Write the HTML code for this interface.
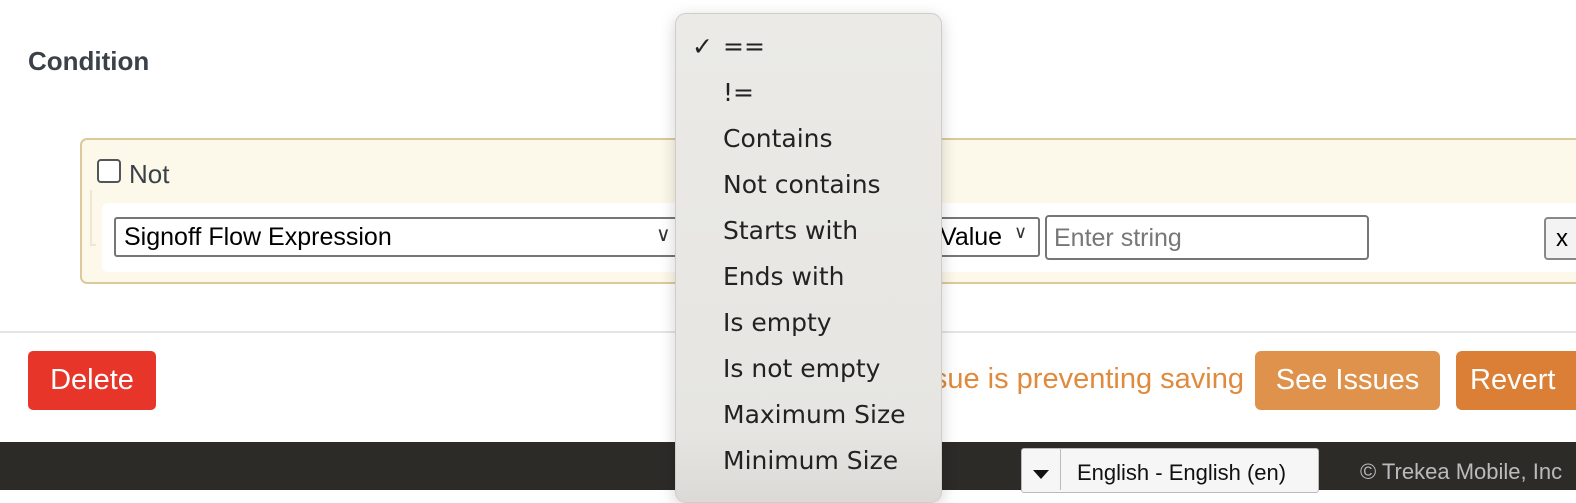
<!DOCTYPE html>
<html><head><style>
*{box-sizing:border-box;margin:0;padding:0}
body{width:1576px;height:490px;overflow:hidden;position:relative;background:#fff;font-family:"Liberation Sans",sans-serif}
.a{position:absolute}
</style></head><body>
<div class="a" style="left:28px;top:46px;font-size:26px;font-weight:bold;color:#3b4148">Condition</div>
<div class="a" style="left:80px;top:138px;width:1520px;height:146px;background:#fcf8ea;border:2px solid #dcc99c;border-radius:7px"></div>
<div class="a" style="left:97px;top:159px;width:24px;height:24px;border:2px solid #555;border-radius:4px;background:#fff"></div>
<div class="a" style="left:129px;top:159px;font-size:26px;color:#3b4148">Not</div>
<div class="a" style="left:90px;top:190px;width:6px;height:56px;border-left:2px solid #eee7d6;border-bottom:2px solid #eee7d6"></div>
<div class="a" style="left:102px;top:203px;width:1480px;height:69px;background:#fff;border-radius:6px"></div>
<div class="a" style="left:114px;top:217px;width:570px;height:40px;border:2px solid #767676;border-radius:3px;background:#fff;font-size:25px;padding:4px 8px;color:#000">Signoff Flow Expression</div>
<div class="a" style="left:656px;top:222px;font-size:20px;color:#333">&#8744;</div>
<div class="a" style="left:900px;top:217px;width:140px;height:40px;border:2px solid #767676;border-radius:3px;background:#fff;font-size:25px;padding:4px 0 0 38px;color:#000;white-space:nowrap">Value</div>
<div class="a" style="left:1014px;top:222px;font-size:18px;color:#333">&#8744;</div>
<div class="a" style="left:1045px;top:215px;width:324px;height:45px;border:2px solid #767676;border-radius:4px;background:#fff;font-size:25px;padding:7px 7px;color:#777">Enter string</div>
<div class="a" style="left:1544px;top:217px;width:50px;height:43px;border:2px solid #888;border-radius:4px;background:#f3f3f3;font-size:24px;padding:6px 10px">x</div>
<div class="a" style="left:0;top:331px;width:1576px;height:2px;background:#e4e4e4"></div>
<div class="a" style="left:28px;top:351px;width:128px;height:59px;background:#e8352a;border-radius:5px;color:#fff;font-size:29px;text-align:center;line-height:59px">Delete</div>
<div class="a" style="left:800px;top:363px;width:444px;text-align:right;font-size:29px;color:#e08a3d;white-space:nowrap">One issue is preventing saving</div>
<div class="a" style="left:1255px;top:351px;width:185px;height:59px;background:#df924c;border-radius:6px;color:#fff;font-size:29px;text-align:center;line-height:59px">See Issues</div>
<div class="a" style="left:1456px;top:351px;width:140px;height:59px;background:#dc7f36;border-radius:6px;color:#fff;font-size:29px;line-height:59px;padding-left:14px">Revert</div>
<div class="a" style="left:0;top:442px;width:1576px;height:48px;background:#2d2b28"></div>
<div class="a" style="left:1021px;top:448px;width:298px;height:45px;background:#f6f6f6;border:1px solid #bbb;border-radius:3px"></div>
<div class="a" style="left:1060px;top:449px;width:1px;height:41px;background:#bbb"></div>
<div class="a" style="left:1033px;top:470px;width:0;height:0;border-left:8px solid transparent;border-right:8px solid transparent;border-top:9px solid #111"></div>
<div class="a" style="left:1077px;top:460px;font-size:22px;color:#111">English - English (en)</div>
<div class="a" style="left:1360px;top:459px;font-size:22px;color:#bbb;white-space:nowrap">© Trekea Mobile, Inc</div>
<div class="a" style="left:675px;top:13px;width:267px;height:490px;background:linear-gradient(#ebeae7,#e6e5e1 85%,#dcdad6);border:1px solid #cfcdc9;border-radius:11px;box-shadow:0 4px 16px rgba(0,0,0,.18)"></div>
<div class="a" style="left:692px;top:24px;font-size:25px;color:#222;line-height:46px;font-family:'DejaVu Sans','Liberation Sans',sans-serif">
<div><span style="display:inline-block;width:31px;font-weight:bold">✓</span>==</div>
<div style="padding-left:31px">!=</div>
<div style="padding-left:31px">Contains</div>
<div style="padding-left:31px">Not contains</div>
<div style="padding-left:31px">Starts with</div>
<div style="padding-left:31px">Ends with</div>
<div style="padding-left:31px">Is empty</div>
<div style="padding-left:31px">Is not empty</div>
<div style="padding-left:31px">Maximum Size</div>
<div style="padding-left:31px">Minimum Size</div>
</div>
</body></html>
